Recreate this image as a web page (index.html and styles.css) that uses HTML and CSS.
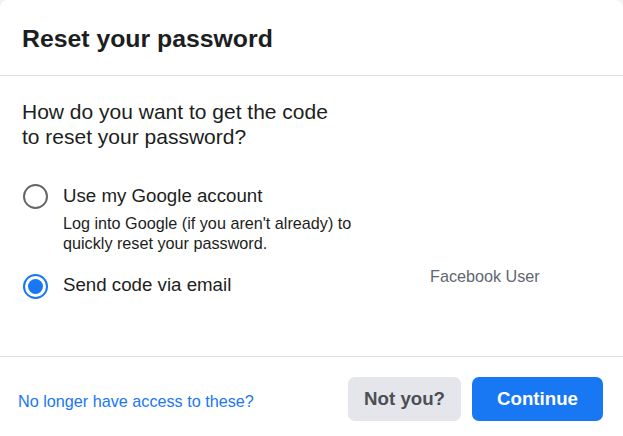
FILE: index.html
```html
<!DOCTYPE html>
<html lang="en">
<head>
<meta charset="utf-8">
<title>Reset your password</title>
<link rel="stylesheet" href="styles.css">
</head>
<body>
<div class="card">
  <header class="card-header">
    <h1 class="title">Reset your password</h1>
  </header>
  <section class="card-body">
    <div class="left">
      <p class="question">How do you want to get the code to reset your password?</p>
      <div class="option first">
        <span class="radio"></span>
        <div class="option-text">
          <div class="label">Use my Google account</div>
          <div class="desc">Log into Google (if you aren't already) to quickly reset your password.</div>
        </div>
      </div>
      <div class="option second">
        <span class="radio checked"></span>
        <div class="option-text">
          <div class="label">Send code via email</div>
        </div>
      </div>
    </div>
    <div class="right">
      <div class="user-name">Facebook User</div>
    </div>
  </section>
  <footer class="card-footer">
    <a class="link" href="#">No longer have access to these?</a>
    <div class="buttons">
      <button class="btn btn-grey" type="button">Not you?</button>
      <button class="btn btn-blue" type="button">Continue</button>
    </div>
  </footer>
</div>
</body>
</html>
```
FILE: styles.css
```css
html, body {
  margin: 0;
  padding: 0;
  background: #f2f3f5;
}
body {
  font-family: "Liberation Sans", Arial, sans-serif;
  color: #1c1e21;
  width: 623px;
  height: 436px;
  overflow: hidden;
}
.card {
  background: #fff;
  border-radius: 8px 8px 0 0;
  height: 436px;
  display: flex;
  flex-direction: column;
}
.card-header {
  height: 76px;
  box-sizing: border-box;
  padding: 24px 22px 0;
  border-bottom: 1px solid #dadde1;
}
.title {
  margin: 0;
  font-size: 24.8px;
  line-height: 30px;
  font-weight: bold;
  color: #1c1e21;
}
.card-body {
  display: flex;
  padding: 23px 0 0 22px;
  height: 281px;
  box-sizing: border-box;
  border-bottom: 1px solid #dadde1;
}
.left {
  flex: 0 0 408px;
}
.question {
  margin: 0;
  font-size: 21px;
  line-height: 25px;
  max-width: 320px;
}
.option {
  display: flex;
  align-items: flex-start;
}
.option.first {
  margin-top: 35px;
}
.option.second {
  margin-top: 20px;
}
.radio {
  flex: 0 0 auto;
  width: 25px;
  height: 25px;
  box-sizing: border-box;
  border: 2px solid #65676b;
  border-radius: 50%;
  margin: 0 15px 0 1px;
  display: flex;
  align-items: center;
  justify-content: center;
}
.radio.checked {
  border-color: #1877f2;
  margin-top: 1px;
}
.radio.checked::after {
  content: "";
  width: 15px;
  height: 15px;
  border-radius: 50%;
  background: #1877f2;
}
.label {
  font-size: 18.7px;
  line-height: 24px;
  color: #1c1e21;
}
.desc {
  margin-top: 5px;
  font-size: 16.2px;
  line-height: 20px;
  max-width: 300px;
  color: #1c1e21;
}
.right {
  padding-top: 167px;
}
.user-name {
  font-size: 16.2px;
  line-height: 20px;
  color: #606770;
}
.card-footer {
  display: flex;
  align-items: center;
  justify-content: space-between;
  padding: 20px 20px 15px 18px;
}
.link {
  font-size: 16.2px;
  line-height: 20px;
  margin-top: 4px;
  color: #1877f2;
  text-decoration: none;
}
.buttons {
  display: flex;
  gap: 11px;
}
.btn {
  height: 44px;
  border: none;
  border-radius: 7px;
  font-family: "Liberation Sans", Arial, sans-serif;
  font-size: 18.7px;
  font-weight: bold;
  cursor: pointer;
}
.btn-grey {
  background: #e4e6eb;
  color: #4b4f56;
  padding: 0 16px;
}
.btn-blue {
  background: #1877f2;
  color: #fff;
  padding: 0 25px;
}
```
